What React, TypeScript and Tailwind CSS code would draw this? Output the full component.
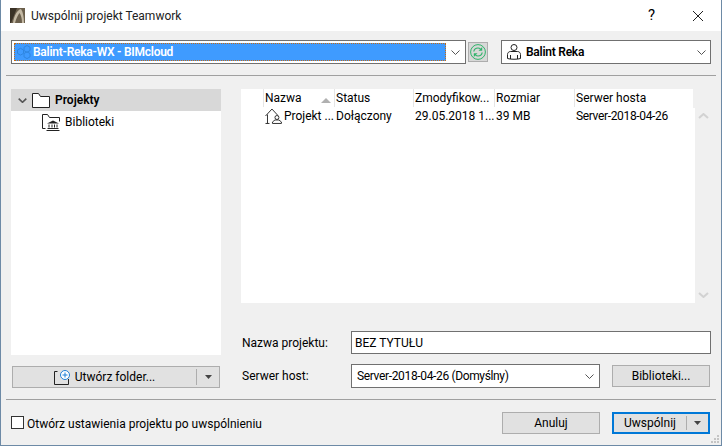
const columns = [
  { label: 'Nazwa', w: 'w-[71px]', sort: true },
  { label: 'Status', w: 'w-[79px]' },
  { label: 'Zmodyfikow...', w: 'w-[81px]' },
  { label: 'Rozmiar', w: 'w-[80px]' },
  { label: 'Serwer hosta', w: 'w-[119px]' },
];

function Chevron({ className = '' }: { className?: string }) {
  return (
    <svg width="9" height="5" viewBox="0 0 9 5" className={className}>
      <path d="M.5.5l4 4 4-4" fill="none" stroke="#555" strokeWidth="1" />
    </svg>
  );
}

function ScrollArrow({ up }: { up?: boolean }) {
  return (
    <svg width="11" height="6" viewBox="0 0 11 6" className={up ? 'rotate-180' : ''}>
      <path d="M1 1l4.500 4L10 1" fill="none" stroke="#d2d2d2" strokeWidth="2" />
    </svg>
  );
}

function FolderIcon() {
  return (
    <svg width="18" height="15" viewBox="0 0 18 15">
      <path d="M.5 14.500V.5h6l2 3h9v11z" fill="#fff" stroke="#222" strokeWidth="1" />
    </svg>
  );
}

function LibraryFolderIcon() {
  return (
    <svg width="18" height="17" viewBox="0 0 18 17">
      <path d="M3.500 14.500h-3V.5h5l2 3h10v4" fill="none" stroke="#222" strokeWidth="1" />
      <path d="M5 9.500l6-3 6 3z" fill="#222" />
      <path d="M7 10.500v3M10 10.500v3M12.500 10.500v3M15 10.500v3" stroke="#222" strokeWidth="1" />
      <path d="M5.500 14.500h11M4.500 16.500h13" stroke="#222" strokeWidth="1" />
    </svg>
  );
}

function ProjectIcon() {
  return (
    <svg width="17" height="17" viewBox="0 0 17 17">
      <path d="M.5 8l6.500-7 6 6.500" fill="none" stroke="#333" strokeWidth="1" />
      <path d="M2.500 6.500v9.500M.5 15.500h4" fill="none" stroke="#333" strokeWidth="1" />
      <circle cx="12" cy="9.500" r="2" fill="none" stroke="#333" strokeWidth="1" />
      <path d="M7.500 15.500v-1.500l2.500-2h4l2.500 2v1.500z" fill="none" stroke="#333" strokeWidth="1" />
    </svg>
  );
}

function NewFolderIcon() {
  return (
    <svg width="17" height="15" viewBox="0 0 17 15">
      <path d="M.5 1.500v13h14V9" fill="none" stroke="#222" strokeWidth="1" />
      <path d="M.5 1.500h3" fill="none" stroke="#222" strokeWidth="1" />
      <circle cx="11" cy="5" r="4.500" fill="#fff" stroke="#1f7fd6" strokeWidth="1" />
      <path d="M8.500 5h5M11 2.500v5" stroke="#1f7fd6" strokeWidth="1" />
    </svg>
  );
}

function UserIcon() {
  return (
    <svg width="14" height="16" viewBox="0 0 14 16">
      <circle cx="7" cy="3.500" r="3" fill="none" stroke="#222" strokeWidth="1" />
      <path
        d="M.5 14.500v-4c0-1.700 1.300-3 3-3h7c1.700 0 3 1.300 3 3v4c-3 1-10 1-13 0z"
        fill="none"
        stroke="#222"
        strokeWidth="1"
      />
      <path d="M3.500 11v4M10.500 11v4" stroke="#222" strokeWidth="1" />
    </svg>
  );
}

function SyncIcon() {
  return (
    <svg width="16" height="16" viewBox="0 0 16 16">
      <circle cx="8" cy="8" r="7.400" fill="none" stroke="#2fb36a" strokeWidth="1" />
      <path d="M3.800 7.500C4.200 5.200 6 4 8 4c1 0 1.800.3 2.500.9" fill="none" stroke="#2fb36a" strokeWidth="1.200" />
      <path d="M8.500 6.800h3.700V3z" fill="#2fb36a" />
      <path d="M12.200 8.500C11.800 10.800 10 12 8 12c-1 0-1.800-.3-2.500-.9" fill="none" stroke="#2fb36a" strokeWidth="1.200" />
      <path d="M7.500 9.200H3.800V13z" fill="#2fb36a" />
    </svg>
  );
}

function CloudHexIcon() {
  return (
    <svg width="14" height="14" viewBox="0 0 14 14">
      <path d="M.5 5l3-1.700L6.500 5v3.400l-3 1.700-3-1.700z" fill="none" stroke="#2f86e0" strokeWidth="1" />
      <path d="M7 8.500l3-1.700 3 1.700v3.400l-3 1.700-3-1.700z" fill="none" stroke="#2f86e0" strokeWidth="1" />
      <path d="M7 2.200L10 .5l3 1.700v3.400l-3 1.700-3-1.700z" fill="none" stroke="#2f86e0" strokeWidth="1" />
    </svg>
  );
}

function AppLogo() {
  return (
    <svg width="15" height="15" viewBox="0 0 15 15">
      <rect width="15" height="15" fill="#6b5f4c" />
      <path d="M0 0h7L1 15H0z" fill="#3a3226" />
      <path d="M3 15C4 8 7 2 11 1c2 3 3 8 3 14h-2c0-5-1-8-2.500-10C8 7 6 11 5 15z" fill="#c4b9a4" />
    </svg>
  );
}

function Caret() {
  return (
    <svg width="7" height="4" viewBox="0 0 7 4">
      <path d="M0 0h7L3.500 4z" fill="#444" />
    </svg>
  );
}

export default function App() {
  return (
    <div
      className="flex h-[446px] w-[722px] flex-col overflow-hidden border-x border-b border-[#6d8aa6] bg-[#f0f0f0] text-[12px] text-black"
      style={{ fontFamily: 'Roboto, sans-serif' }}
    >
      {/* title bar */}
      <div className="flex h-[31px] shrink-0 items-center bg-white pl-[9px]">
        <AppLogo />
        <span className="ml-[6px] text-[#222]">Uwspólnij projekt Teamwork</span>
        <span className="ml-auto mr-[37px] text-[15px] leading-none">?</span>
        <svg width="12" height="12" viewBox="0 0 12 12" className="mr-[17px]">
          <path d="M1 1l10 10M11 1L1 11" stroke="#222" strokeWidth="1" />
        </svg>
      </div>

      {/* top row */}
      <div className="mt-[9px] flex h-[24px] shrink-0 items-center pl-[10px]">
        <div className="flex h-[24px] w-[455px] items-center border border-[#707070] bg-white p-[2px]">
          <div className="flex h-full w-[432px] items-center gap-[2px] border border-dotted border-[#c86a10] bg-[#3f9bff] pl-[2px] font-semibold text-white">
            <CloudHexIcon />
            <span className="tracking-[-0.25px]">Balint-Reka-WX - BIMcloud</span>
          </div>
          <Chevron className="ml-[5px]" />
        </div>
        <div className="ml-[2px] flex h-[20px] w-[20px] items-center justify-center border border-[#adadad] bg-[#d8d8d8]">
          <SyncIcon />
        </div>
        <div className="ml-[13px] flex h-[24px] w-[210px] items-center border border-[#707070] bg-white pl-[5px]">
          <UserIcon />
          <span className="ml-[5px] font-semibold tracking-[-0.25px]">Balint Reka</span>
          <Chevron className="ml-auto mr-[4px]" />
        </div>
      </div>

      <div className="mx-[5px] mt-[11px] h-px shrink-0 bg-[#a0a0a0]" />

      {/* main */}
      <div className="mt-[13px] flex h-[299px] shrink-0 pl-[10px]">
        <div className="flex w-[210px] flex-col">
          <div className="h-[266px] bg-white">
            <div className="flex h-[22px] items-center bg-[#d8d8d8] pl-[7px]">
              <svg width="9" height="5" viewBox="0 0 9 5">
                <path d="M.7.7l3.800 3.600L8.300.7" fill="none" stroke="#555" strokeWidth="1.600" />
              </svg>
              <span className="ml-[5px] flex">
                <FolderIcon />
              </span>
              <span className="ml-[5px] font-semibold">Projekty</span>
            </div>
            <div className="flex h-[22px] items-center pl-[31px]">
              <LibraryFolderIcon />
              <span className="ml-[5px]">Biblioteki</span>
            </div>
          </div>
          <div className="ml-[1px] mt-[11px] flex h-[22px] w-[208px] items-center border border-[#adadad] bg-[#e1e1e1]">
            <div className="flex flex-1 items-center justify-center gap-[4px]">
              <NewFolderIcon />
              <span>Utwórz folder...</span>
            </div>
            <div className="h-[16px] w-px bg-[#adadad]" />
            <div className="flex w-[22px] justify-center">
              <Caret />
            </div>
          </div>
        </div>

        <div className="ml-[20px] flex w-[470px] flex-col">
          <div className="flex h-[215px]">
            <div className="flex w-[454px] flex-col bg-white pl-[22px]">
              <div className="flex h-[19px]">
                {columns.map((c) => (
                  <div
                    key={c.label}
                    className={`relative flex h-[18px] ${c.w} items-center border-l border-[#e5e5e5] pl-[1px] whitespace-nowrap`}
                  >
                    {c.label}
                    {c.sort ? (
                      <svg width="10" height="5" viewBox="0 0 10 5" className="absolute right-[3px] top-[9px]">
                        <path d="M5 0l5 5H0z" fill="#b0b0b0" />
                      </svg>
                    ) : null}
                  </div>
                ))}
                <div className="h-[19px] w-[2px] bg-[#f0f0f0]" />
              </div>
              <div className="flex h-[16px] items-center whitespace-nowrap">
                <div className="flex w-[71px] items-center pl-[2px]">
                  <ProjectIcon />
                  <span className="ml-[2px]">Projekt ...</span>
                </div>
                <span className="w-[79px] pl-[2px]">Dołączony</span>
                <span className="w-[81px] pl-[2px]">29.05.2018 1...</span>
                <span className="w-[80px] pl-[2px]">39 MB</span>
                <span className="pl-[2px] tracking-[-0.35px]">Server-2018-04-26</span>
              </div>
            </div>
            <div className="flex w-[16px] flex-col items-center justify-between pb-[5px] pt-[24px]">
              <ScrollArrow up />
              <ScrollArrow />
            </div>
          </div>

          <div className="mt-[28px] flex h-[23px] items-center">
            <span className="ml-[1px] w-[109px]">Nazwa projektu:</span>
            <div className="flex h-[23px] w-[360px] items-center border border-[#707070] bg-white pl-[3px]">BEZ TYTUŁU</div>
          </div>
          <div className="mt-[10px] flex h-[24px] items-start">
            <span className="ml-[1px] w-[109px] self-center">Serwer host:</span>
            <div className="flex h-[24px] w-[249px] items-center border border-[#707070] bg-white pl-[5px]">
              <span className="tracking-[-0.35px]">Server-2018-04-26 (Domyślny)</span>
              <Chevron className="ml-auto mr-[5px]" />
            </div>
            <div className="ml-[12px] mt-[1px] flex h-[22px] w-[98px] items-center justify-center border border-[#adadad] bg-[#e1e1e1]">
              Biblioteki...
            </div>
          </div>
        </div>
      </div>

      <div className="mx-[5px] mt-[11px] h-px shrink-0 bg-[#a0a0a0]" />

      {/* footer */}
      <div className="relative flex flex-1 items-start pl-[10px] pt-[12px]">
        <div className="mt-[4px] h-[13px] w-[13px] border border-[#333] bg-white" />
        <span className="ml-[3px] mt-[3px]">Otwórz ustawienia projektu po uwspólnieniu</span>
        <div className="ml-auto flex items-start gap-[12px] pr-[11px]">
          <div className="flex h-[22px] w-[98px] items-center justify-center border border-[#adadad] bg-[#e1e1e1]">Anuluj</div>
          <div className="flex h-[22px] w-[98px] items-center border-2 border-[#0078d7] bg-[#e1e1e1]">
            <span className="flex-1 text-center">Uwspólnij</span>
            <span className="h-[14px] w-px bg-[#adadad]" />
            <span className="flex w-[21px] justify-center">
              <Caret />
            </span>
          </div>
        </div>
        <svg width="10" height="10" viewBox="0 0 10 10" className="absolute bottom-[1px] right-[1px]">
          <path d="M7 1h2v2H7zM4 4h2v2H4zM7 4h2v2H7zM1 7h2v2H1zM4 7h2v2H4zM7 7h2v2H7z" fill="#c4c4c4" />
        </svg>
      </div>
    </div>
  );
}
